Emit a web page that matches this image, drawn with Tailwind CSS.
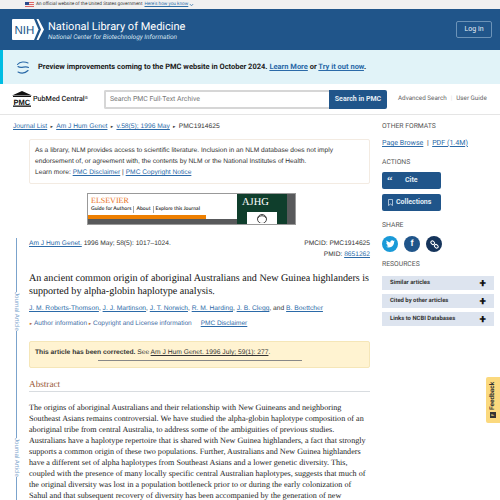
<!DOCTYPE html>
<html lang="en">
<head>
  <meta charset="UTF-8" />
  <meta name="viewport" content="width=device-width, initial-scale=1" />
  <title>An ancient common origin of aboriginal Australians - PMC</title>
  <script src="https://cdn.jsdelivr.net/npm/@tailwindcss/browser@4"></script>
</head>
<body class="relative h-[500px] w-[500px] overflow-hidden bg-white font-['Roboto',sans-serif] text-[#212121] [text-rendering:geometricPrecision]">
  <!-- gov banner -->
  <div class="flex h-[9px] items-center bg-[#f0f0f0] pl-[25px] text-[4.7px] whitespace-nowrap text-[#333]">
    <svg width="9" height="6" viewBox="0 0 9 6"><rect width="9" height="6" fill="#d66"/><rect y="1" width="9" height="1" fill="#eee"/><rect y="3" width="9" height="1" fill="#eee"/><rect y="5" width="9" height="1" fill="#eee"/><rect width="4" height="3" fill="#2b4a8c"/></svg>
    <span class="ml-[2px]">An official website of the United States government</span>
    <span class="ml-[2px] text-[#2f6fa8] underline">Here's how you know</span>
    <svg width="5" height="4" viewBox="0 0 5 4" class="ml-[1px]"><path d="M.8 1 2.500 2.800 4.200 1" fill="none" stroke="#2f6fa8" stroke-width=".7"/></svg>
  </div>

  <!-- nih header -->
  <header class="flex h-[41px] items-center justify-between bg-[#20558a] pr-[8px] pl-[12px] text-white">
    <div class="flex items-center gap-[4px]">
      <svg width="32" height="21" viewBox="0 0 32 21">
        <path d="M1 0H22L26.500 10.500 22 21H1Q0 21 0 20V1Q0 0 1 0Z" fill="#fff"/>
        <path d="M24.500 0H26.500L32 10.500 26.500 21H24.500L29 10.500Z" fill="#fff"/>
        <text x="2.500" y="15" font-family="'Liberation Sans',sans-serif" font-size="11.500" fill="#20558a">NIH</text>
      </svg>
      <div class="pt-[1px]">
        <div class="text-[11px] leading-[13px] whitespace-nowrap">National Library of Medicine</div>
        <div class="text-[6.500px] leading-[8px] whitespace-nowrap text-[#d9e6f2] italic">National Center for Biotechnology Information</div>
      </div>
    </div>
    <button class="h-[17px] w-[36px] rounded-[2px] border border-[#6c93b8] text-[7px] text-[#e3edf5]">Log in</button>
  </header>

  <!-- preview alert -->
  <div class="flex h-[34px] items-center border-l-[3px] border-[#00bde3] bg-[#e1f3f8] pl-[13px] text-[7.500px] font-bold whitespace-nowrap">
    <svg width="14" height="13" viewBox="0 0 14 13" class="mr-[8px]" fill="none" stroke="#2b6aa8" stroke-width="1.100" stroke-linecap="round">
      <path d="M1.500 3.500C4 .5 9 .5 12 2"/>
      <path d="M2 5.500C5 8 9 4.500 12.500 6.500"/>
      <path d="M2 11C5 12.500 9 12.500 12 9.500"/>
    </svg>
    <span>Preview improvements coming to the PMC website in October 2024. <a class="text-[#2b6aa8] underline">Learn More</a> or <a class="text-[#2b6aa8] underline">Try it out now</a>.</span>
  </div>

  <!-- search row -->
  <div class="flex h-[31px] items-center border-b border-[#e5e5e5] pl-[12px] whitespace-nowrap">
    <svg width="20" height="16" viewBox="0 0 20 16" class="shrink-0">
      <path d="M0 4.500 10 0 20 4.500Z" fill="#111"/>
      <rect x="1" y="5" width="18" height="1" fill="#111"/>
      <rect x="1" y="14.500" width="18" height="1.300" fill="#111"/>
      <text x="1.500" y="13.500" font-family="'Liberation Sans',sans-serif" font-size="7.500" font-weight="700" fill="#111">PMC</text>
    </svg>
    <span class="ml-[1px] w-[71px] shrink-0 text-[7.200px] font-medium text-[#222]">PubMed Central<sup class="text-[4px]">®</sup></span>
    <div class="flex h-[19px] w-[225px] shrink-0 items-center rounded-l-[2px] border-2 border-r-0 border-[#d6d6d6] pl-[4px] text-[6.900px] text-[#777]">Search PMC Full-Text Archive</div>
    <button class="h-[19px] w-[58px] shrink-0 rounded-r-[2px] bg-[#20558a] text-[7px] font-bold text-[#e3edf5]">Search in PMC</button>
    <div class="ml-[11px] flex items-center text-[6.300px] text-[#666]">Advanced Search<span class="mx-[4px] text-[#ddd]">|</span>User Guide</div>
  </div>

  <!-- page body -->
  <div class="flex pl-[13px]">
    <main class="relative w-[357px] shrink-0">
      <nav class="flex h-[24px] items-center gap-[2.500px] font-['Liberation_Sans',sans-serif] text-[6.700px] whitespace-nowrap text-[#333]">
        <a class="text-[#2b6aa8] underline">Journal List</a><span class="text-[4px]">►</span>
        <a class="text-[#2b6aa8] underline">Am J Hum Genet</a><span class="text-[4px]">►</span>
        <a class="text-[#2b6aa8] underline">v.58(5); 1996 May</a><span class="text-[4px]">►</span>
        <span>PMC1914625</span>
      </nav>

      <div class="ml-[16px] h-[45px] rounded-[2px] border border-[#f3ebe2] px-[5px] pt-[5px] font-['Liberation_Sans',sans-serif] text-[6.650px] leading-[11px] text-[#333]">
        <div class="whitespace-nowrap">As a library, NLM provides access to scientific literature. Inclusion in an NLM database does not imply</div>
        <div class="whitespace-nowrap">endorsement of, or agreement with, the contents by NLM or the National Institutes of Health.</div>
        <div>Learn more: <a class="text-[#2b6aa8] underline">PMC Disclaimer</a> | <a class="text-[#2b6aa8] underline">PMC Copyright Notice</a></div>
      </div>

      <!-- journal ad -->
      <div class="mt-[9px] ml-[74px] flex h-[32px] w-[209px] overflow-hidden border border-[#999]">
        <div class="flex w-[149px] shrink-0 flex-col">
          <div class="h-[12px] pl-[3px] font-['Liberation_Serif',serif] text-[8px] leading-[13px] text-[#e9711c]">ELSEVIER</div>
          <div class="flex h-[7px] items-center pl-[3px] font-['Lato',sans-serif] text-[5.100px] font-bold whitespace-nowrap text-[#444]">
            <span class="border-r border-[#aaa] pr-[2px]">Guide for Authors</span><span class="border-r border-[#aaa] px-[2px]">About</span><span class="pl-[2px]">Explore this Journal</span>
          </div>
          <div class="mt-[2px] h-[4px] w-[118px] bg-[#ee7f00]"></div>
          <div class="flex-1 bg-[#58595b]"></div>
        </div>
        <div class="w-[50px] shrink-0 bg-[#0f3e2c] pt-[3px] pl-[5px] font-['Liberation_Serif',serif] text-[10.500px] leading-[11px] text-white">AJHG
          <div class="mt-[4px] ml-[5px] flex h-[20px] w-[30px] justify-center bg-white pt-[1px]">
            <svg width="12" height="10" viewBox="0 0 12 10" fill="none" stroke="#444" stroke-width="1"><circle cx="6" cy="6" r="4.500"/><path d="M2 5C4 2 8 2 10 5"/></svg>
          </div>
        </div>
        <div class="flex-1 bg-[#58595b]"></div>
      </div>

      <!-- citation -->
      <div class="mt-[13px] ml-[16px] flex justify-between font-['Liberation_Sans',sans-serif] text-[6.650px] leading-[11px] text-[#333]">
        <div><a class="text-[#2b6aa8] underline">Am J Hum Genet.</a> 1996 May; 58(5): 1017–1024.</div>
        <div class="text-right">
          <div>PMCID: PMC1914625</div>
          <div>PMID: <a class="text-[#2b6aa8] underline">8651262</a></div>
        </div>
      </div>

      <h1 class="mt-[13px] ml-[16px] font-['Liberation_Serif',serif] text-[10.100px] leading-[12.500px] font-normal whitespace-nowrap text-[#111]">An ancient common origin of aboriginal Australians and New Guinea highlanders is<br>supported by alpha-globin haplotype analysis.</h1>

      <div class="mt-[5px] ml-[16px] font-['Liberation_Sans',sans-serif] text-[6.700px] leading-[11px] whitespace-nowrap text-[#333]">
        <a class="text-[#2b6aa8] underline">J. M. Roberts-Thomson</a>, <a class="text-[#2b6aa8] underline">J. J. Martinson</a>, <a class="text-[#2b6aa8] underline">J. T. Norwich</a>, <a class="text-[#2b6aa8] underline">R. M. Harding</a>, <a class="text-[#2b6aa8] underline">J. B. Clegg</a>, and <a class="text-[#2b6aa8] underline">B. Boettcher</a>
      </div>

      <div class="mt-[4px] ml-[16px] flex h-[11px] items-center font-['Liberation_Sans',sans-serif] text-[6.500px] whitespace-nowrap text-[#3f6da5]">
        <span class="mr-[1px] text-[4px] text-[#b5692d]">►</span><span>Author information</span>
        <span class="mx-[1px] text-[4px] text-[#b5692d]">►</span><span>Copyright and License information</span>
        <a class="ml-[9px] text-[#2b6aa8] underline">PMC Disclaimer</a>
      </div>

      <div class="relative mt-[12px] ml-[16px] h-[27px] rounded-[2px] border border-[#f5e6b8] bg-[#fff3d1] pt-[5px] pl-[5px] font-['Liberation_Sans',sans-serif] text-[6.700px] leading-[11px] text-[#333]">
        <b>This article has been corrected.</b> See <a class="underline">Am J Hum Genet. 1996 July; 59(1): 277</a>.
        <div class="absolute top-[18px] left-[68px] h-px w-[204px] bg-[#888]"></div>
      </div>

      <h2 class="mt-[10px] ml-[16px] border-b border-[#d8dce0] pb-[1px] font-['Liberation_Serif',serif] text-[9.200px] leading-[12px] font-normal text-[#985735]">Abstract</h2>

      <p class="mt-[10px] ml-[16px] font-['Liberation_Serif',serif] text-[8.150px] leading-[11px] whitespace-nowrap text-[#222]">
        The origins of aboriginal Australians and their relationship with New Guineans and neighboring<br>
        Southeast Asians remains controversial. We have studied the alpha-globin haplotype composition of an<br>
        aboriginal tribe from central Australia, to address some of the ambiguities of previous studies.<br>
        Australians have a haplotype repertoire that is shared with New Guinea highlanders, a fact that strongly<br>
        supports a common origin of these two populations. Further, Australians and New Guinea highlanders<br>
        have a different set of alpha haplotypes from Southeast Asians and a lower genetic diversity. This,<br>
        coupled with the presence of many locally specific central Australian haplotypes, suggests that much of<br>
        the original diversity was lost in a population bottleneck prior to or during the early colonization of<br>
        Sahul and that subsequent recovery of diversity has been accompanied by the generation of new
      </p>

      <!-- journal article rail -->
      <div class="absolute top-[123px] left-[3px] h-[300px] w-px bg-[#7ba3cc]"></div>
      <div class="absolute top-[177px] left-[-1px] flex h-[39px] w-[9px] items-center justify-center bg-white font-['Liberation_Sans',sans-serif] text-[6.200px] whitespace-nowrap text-[#7ba3cc] [writing-mode:vertical-rl]">Journal Article</div>
      <div class="absolute top-[323px] left-[-1px] flex h-[39px] w-[9px] items-center justify-center bg-white font-['Liberation_Sans',sans-serif] text-[6.200px] whitespace-nowrap text-[#7ba3cc] [writing-mode:vertical-rl]">Journal Article</div>
    </main>

    <!-- right column -->
    <aside class="ml-[12px] w-[112px] shrink-0 pt-[7px]">
      <h3 class="text-[6.800px] leading-[9px] font-normal text-[#555]">OTHER FORMATS</h3>
      <div class="mt-[7px] text-[7.100px] leading-[9px] whitespace-nowrap text-[#333]"><a class="text-[#2b6aa8] underline">Page Browse</a> &nbsp;|&nbsp; <a class="text-[#2b6aa8] underline">PDF (1.4M)</a></div>
      <h3 class="mt-[11px] text-[6.800px] leading-[9px] font-normal text-[#555]">ACTIONS</h3>
      <button class="mt-[5px] flex h-[17px] w-[59px] items-center rounded-[2px] bg-[#20558a] pl-[5px] text-[7px] font-bold text-[#e3edf5]"><span class="w-[18px] text-left font-['Liberation_Serif',serif] text-[11px] leading-[11px]">“</span><span>Cite</span></button>
      <button class="mt-[5px] flex h-[17px] w-[59px] items-center rounded-[2px] bg-[#20558a] pl-[6px] text-[7px] font-bold text-[#e3edf5]">
        <svg width="5" height="7" viewBox="0 0 5 7" class="mr-[3px]" fill="none" stroke="#e3edf5" stroke-width=".7"><path d="M.5.5H4.500V6.500L2.500 5 .5 6.500Z"/></svg>Collections
      </button>
      <h3 class="mt-[10px] text-[6.800px] leading-[9px] font-normal text-[#555]">SHARE</h3>
      <div class="mt-[6px] flex gap-[6px]">
        <span class="flex h-[16px] w-[16px] items-center justify-center rounded-full bg-[#1a9ad8]">
          <svg width="9" height="8" viewBox="0 0 24 20" fill="#fff"><path d="M24 2.400c-.9.400-1.800.7-2.800.8 1-.6 1.800-1.600 2.200-2.700-1 .6-2 1-3.100 1.200C19.300.7 18 0 16.600 0c-2.700 0-4.900 2.200-4.900 4.900 0 .4 0 .8.100 1.100C7.700 5.800 4.100 3.800 1.700.9c-.4.700-.7 1.600-.7 2.500 0 1.700.9 3.200 2.200 4.100-.8 0-1.600-.2-2.200-.6v.1c0 2.400 1.700 4.400 3.900 4.800-.4.100-.8.200-1.300.2-.3 0-.6 0-.9-.1.600 2 2.400 3.400 4.600 3.400-1.700 1.300-3.800 2.100-6.100 2.100-.4 0-.8 0-1.200-.1C2.200 18.200 4.800 19 7.500 19c9.100 0 14-7.500 14-14v-.6c1-.7 1.800-1.600 2.500-2Z"/></svg>
        </span>
        <span class="flex h-[16px] w-[16px] items-center justify-center rounded-full bg-[#20558a] font-['Liberation_Sans',sans-serif] text-[9px] font-bold text-white">f</span>
        <span class="flex h-[16px] w-[16px] items-center justify-center rounded-full bg-[#15345b]">
          <svg width="9" height="9" viewBox="0 0 9 9" fill="none" stroke="#fff" stroke-width="1"><rect x=".7" y="1.200" width="4" height="3" rx="1.500" transform="rotate(45 2.700 2.700)"/><rect x="4.300" y="4.800" width="4" height="3" rx="1.500" transform="rotate(45 6.300 6.300)"/></svg>
        </span>
      </div>
      <h3 class="mt-[8px] text-[6.800px] leading-[9px] font-normal text-[#555]">RESOURCES</h3>
      <div class="mt-[7px] flex flex-col gap-[4px] text-[5.900px] font-bold text-[#333]">
        <div class="flex h-[14px] items-center justify-between bg-[#dde4ef] pr-[8px] pl-[8px]"><span>Similar articles</span><span class="text-[12px] leading-none font-black text-[#111]">+</span></div>
        <div class="flex h-[14px] items-center justify-between bg-[#dde4ef] pr-[8px] pl-[8px]"><span>Cited by other articles</span><span class="text-[12px] leading-none font-black text-[#111]">+</span></div>
        <div class="flex h-[14px] items-center justify-between bg-[#dde4ef] pr-[8px] pl-[8px]"><span>Links to NCBI Databases</span><span class="text-[12px] leading-none font-black text-[#111]">+</span></div>
      </div>
    </aside>
  </div>

  <!-- feedback tab -->
  <div class="absolute top-[377px] left-[486px] flex h-[46px] w-[14px] rotate-180 items-center justify-center gap-[2px] rounded-r-[2px] bg-[#fbd97e] text-[6.500px] font-bold text-[#333] [writing-mode:vertical-rl]">
    <span class="flex h-[6px] w-[6px] items-center justify-center bg-[#333] text-[4px] text-[#fbd97e]">F</span><span>Feedback</span>
  </div>
</body>
</html>
